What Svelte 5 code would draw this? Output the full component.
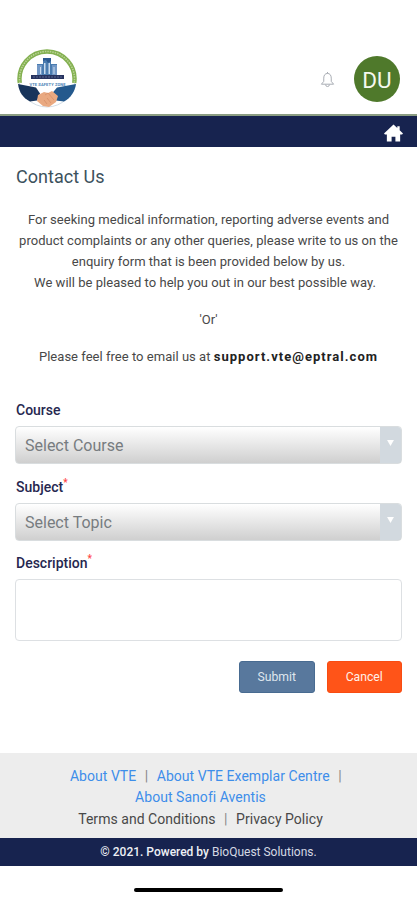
<script lang="ts">
  const fields = [
    { id: 'course', label: 'Course', placeholder: 'Select Course', required: false },
    { id: 'subject', label: 'Subject', placeholder: 'Select Topic', required: true }
  ];

  let description = '';
</script>

<div class="page">
  <header class="header">
    <svg class="logo" viewBox="0 0 60 60" aria-label="VTE Safety Zone">
      <circle cx="30" cy="30" r="28" fill="#fff" stroke="#c5d3de" stroke-width="0.8" />
      <path d="M2.800 34A27.500 27.500 0 1 1 57.200 34" fill="none" stroke="#83b050" stroke-width="4.400" />
      <path d="M2.800 34A27.500 27.500 0 1 1 57.200 34" fill="none" stroke="#b9d394" stroke-width="1.600" stroke-dasharray="1.500 1" />
      <path d="M26 10h8v5h6v11H20V15h6z" fill="#4a7cb0" />
      <path d="M20 16h5v10h-5zM35 16h5v10h-5z" fill="#7398c6" />
      <path d="M27 14h1.500v11H27zM31.500 14H33v11h-1.500zM23 18h1v7h-1zM36.500 18h1v7h-1z" fill="#c9dcee" />
      <path d="M26 9h8v3l-3 2-2-3-3 1z" fill="#2c5a91" />
      <path d="M14 26h33v4H14z" fill="#27335f" />
      <path d="M16 28h29" stroke="#65749c" stroke-width="0.800" stroke-dasharray="2 1" />
      <text x="30.500" y="36.500" text-anchor="middle" textLength="36">VTE SAFETY ZONE</text>
      <path d="M1 35l18 3.500 4 6-3 7-7 1C6 49 2 43 1 35z" fill="#18345b" />
      <path d="M59 35l-19 3.500-5 6 4 7 8 1c7-4 11-10 12-17.500z" fill="#24598d" />
      <path d="M21 46l6-3 4 1 4-2 6 5-2 6-7 5-6-1-6-5z" fill="#e9a981" />
      <path d="M28 46l3-2 6 7M27 51l3 4M30 49l4 5" fill="none" stroke="#d58e68" stroke-width="0.800" />
    </svg>
    <div class="account">
      <svg class="bell" viewBox="0 0 16 18" aria-label="Notifications">
        <path d="M8 1v1.500M4 11V7.500C4 4.500 5.500 2.500 8 2.500s4 2 4 5V11l2.500 3h-13zM6 14.500a2 2 0 0 0 4 0" />
      </svg>
      <div class="avatar">DU</div>
    </div>
  </header>

  <nav class="navbar">
    <svg class="home" viewBox="0 0 20 18" aria-label="Home">
      <path d="M10 0l4 3.800V2h2.500v4.200L20 9.500l-1 1h-2V18h-5v-5H8v5H3v-7.500H1l-1-1z" />
    </svg>
  </nav>

  <main class="content">
    <h1>Contact Us</h1>
    <div class="intro">
      <p>
        For seeking medical information, reporting adverse events and<br />
        product complaints or any other queries, please write to us on the<br />
        enquiry form that is been provided below by us.<br />
        <span class="pleased">We will be pleased to help you out in our best possible way.</span>
      </p>
      <p>'Or'</p>
      <p>Please feel free to email us at <b>support.vte@eptral.com</b></p>
    </div>

    <form class="form">
      {#each fields as field}
        <label for={field.id}>{field.label}{#if field.required}<i>*</i>{/if}</label>
        <button type="button" class="select" id={field.id}>
          <span class="placeholder">{field.placeholder}</span>
          <span class="arrow">
            <svg viewBox="0 0 8 7"><path d="M0 0h8L4 7z" /></svg>
          </span>
        </button>
      {/each}
      <label for="description">Description<i>*</i></label>
      <textarea id="description" bind:value={description}></textarea>
      <div class="actions">
        <button type="button" class="btn submit">Submit</button>
        <button type="button" class="btn cancel">Cancel</button>
      </div>
    </form>
  </main>

  <footer>
    <div class="links">
      <div class="courses"><a href="#vte">About VTE</a><em>|</em><a href="#centre">About VTE Exemplar Centre</a><em>|</em></div>
      <div class="shifted"><a href="#sanofi">About Sanofi Aventis</a></div>
      <div class="shifted">Terms and Conditions<em>|</em>Privacy Policy</div>
    </div>
    <div class="copyright"><span class="powered">© 2021. Powered by</span>&nbsp;<span>BioQuest Solutions.</span></div>
  </footer>
  <div class="home-indicator"></div>
</div>

<style>
  :global(body) {
    background: #fff;
  }

  .page {
    width: 417px;
    height: 900px;
    box-sizing: border-box;
    overflow: hidden;
    display: flex;
    flex-direction: column;
    font-family: Roboto, 'Liberation Sans', sans-serif;
    color: #484848;
  }

  .header {
    height: 116px;
    box-sizing: border-box;
    padding: 44px 17px 0;
    display: flex;
    align-items: center;
    justify-content: space-between;
    border-bottom: 2px solid #8b9d82;
  }

  .logo {
    width: 60px;
    height: 60px;
  }

  .logo text {
    font-size: 4px;
    font-weight: bold;
    fill: #4a82b5;
  }

  .account {
    display: flex;
    align-items: center;
    gap: 19px;
  }

  .bell {
    width: 15px;
    height: 17px;
    fill: none;
    stroke: #a3a8af;
    stroke-width: 1;
  }

  .avatar {
    width: 46px;
    height: 46px;
    border-radius: 50%;
    background: #4f792b;
    color: #f5f8ef;
    font-size: 22.5px;
    line-height: 49px;
    text-align: center;
  }

  .navbar {
    height: 31px;
    background: #17234f;
    display: flex;
    align-items: center;
    justify-content: flex-end;
    padding: 2px 14px 0 0;
    box-sizing: border-box;
  }

  .home {
    width: 19px;
    height: 18px;
    fill: #fff;
  }

  .content {
    padding: 0 15px;
    height: 606px;
    box-sizing: border-box;
  }

  h1 {
    margin: 0;
    padding: 18px 0 20px 1px;
    font-size: 18px;
    line-height: 24px;
    font-weight: 400;
    letter-spacing: 0.02px;
    color: #3c515c;
  }

  .intro {
    text-align: center;
    font-size: 13px;
    line-height: 21px;
    white-space: nowrap;
    letter-spacing: 0.03px;
  }

  .intro p {
    margin: 0 -10px 16px;
  }

  .pleased {
    margin-right: 7px;
  }

  .intro b {
    color: #222;
    letter-spacing: 1.03px;
  }

  .form {
    padding-top: 17px;
  }

  label {
    display: block;
    height: 26px;
    padding-left: 1px;
    font-size: 14px;
    line-height: 21px;
    font-weight: 500;
    color: #26274f;
  }

  label i {
    color: #f44;
    font-size: 10px;
    line-height: 0;
    font-style: normal;
    vertical-align: 6px;
  }

  .select {
    width: 387px;
    height: 38px;
    padding: 0;
    margin: 0 0 12.5px;
    display: flex;
    align-items: stretch;
    justify-content: space-between;
    overflow: hidden;
    border: 1px solid #d9dddf;
    border-radius: 4px;
    background: linear-gradient(#fff, #cfcfcf);
    font-family: inherit;
  }

  .placeholder {
    padding-left: 9px;
    font-size: 16px;
    line-height: 38px;
    color: #777c80;
  }

  .arrow {
    width: 21px;
    display: flex;
    align-items: center;
    justify-content: center;
    padding-bottom: 4px;
    background: #d2d9df;
  }

  .arrow svg {
    width: 7px;
    height: 6px;
    fill: #fff;
  }

  textarea {
    display: block;
    width: 387px;
    height: 62px;
    box-sizing: border-box;
    border: 1px solid #dde0e3;
    border-radius: 4px;
    resize: none;
  }

  .actions {
    display: flex;
    justify-content: flex-end;
    gap: 12px;
    margin-top: 20px;
  }

  .btn {
    width: 75.5px;
    height: 32px;
    padding: 0;
    border: 1px solid #486b91;
    border-radius: 3px;
    background: #58789d;
    color: #dfe6ed;
    font-family: inherit;
    font-size: 12.2px;
  }

  .cancel {
    border-color: #f84c12;
    background: #ff5418;
    color: #fff0e8;
  }

  .links {
    height: 85px;
    box-sizing: border-box;
    padding-top: 12.5px;
    background: #ededed;
    text-align: center;
    font-size: 14px;
    line-height: 21.5px;
    white-space: nowrap;
  }

  .links a {
    color: #3e8eea;
    text-decoration: none;
  }

  .links em {
    margin: 0 8.5px;
    font-style: normal;
    color: #888;
  }

  .courses {
    padding-left: 3px;
    letter-spacing: 0.04px;
  }

  .shifted {
    padding-right: 16px;
    letter-spacing: 0.04px;
  }

  .copyright {
    height: 28px;
    background: #17234f;
    color: #d5d9e3;
    font-size: 12px;
    line-height: 28px;
    text-align: center;
  }

  .powered {
    font-weight: 500;
    color: #eef0f5;
  }

  .home-indicator {
    width: 149px;
    height: 4px;
    margin: 22px auto 0;
    border-radius: 2px;
    background: #000;
  }
</style>
